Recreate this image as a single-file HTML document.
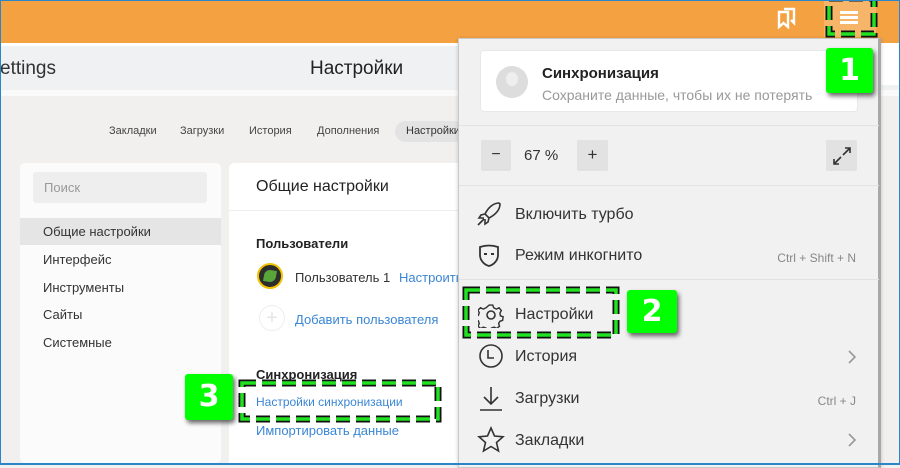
<!DOCTYPE html>
<html><head><meta charset="utf-8"><style>
*{margin:0;padding:0;box-sizing:border-box}
body{width:900px;height:465px;overflow:hidden;font-family:"Liberation Sans","DejaVu Sans",sans-serif;background:#f1f0ef;position:relative;color:#222}
.a{position:absolute}
.frame{position:absolute;left:0;top:0;width:900px;height:465px;border:1px solid #2a86c8;border-bottom-width:2px;pointer-events:none;z-index:50}
.lab{position:absolute;background:#00ff00;color:#fff;font-weight:bold;font-size:30px;text-align:center;border-radius:3px;box-shadow:2px 3px 5px rgba(0,0,0,.6);z-index:40;font-family:"DejaVu Sans",sans-serif}
.mi{position:absolute;left:515px;font-size:16px;color:#333}
.sc{position:absolute;right:44px;font-size:12px;color:#888}
.side{position:absolute;left:43px;font-size:13px;color:#333}
svg.ic{position:absolute;fill:none;stroke:#333;stroke-width:1.6}
</style></head><body>
<div class="a" style="left:0;top:0;width:900px;height:43px;background:#f4a142"></div>
<div class="a" style="left:824px;top:0;width:52px;height:37px;background:#f7b56a"></div>
<svg class="a" style="left:776px;top:7px" width="22" height="22" viewBox="0 0 22 22"><path d="M3 5h9v15l-4.5-4-4.5 4z M8 2h10v14l-3-3" fill="none" stroke="#fff" stroke-width="2.4"/></svg>
<div class="a" style="left:840px;top:11px;width:18px;height:3px;background:#fff"></div>
<div class="a" style="left:840px;top:16px;width:18px;height:3px;background:#fff"></div>
<div class="a" style="left:840px;top:21px;width:18px;height:3px;background:#fff"></div>
<div class="a" style="left:0;top:46px;width:900px;height:44px;background:#f0f1f3"></div>
<div class="a" style="left:0;top:43px;width:900px;height:3px;background:#fff"></div>
<div class="a" style="left:0;top:90px;width:900px;height:6px;background:#fafafa"></div>
<div class="a" style="left:0;top:58px;font-size:19px;color:#333">ettings</div>
<div class="a" style="left:310px;top:58px;font-size:19px;color:#222">Настройки</div>
<div class="a" style="top:125px;font-size:11px;color:#444;left:109px">Закладки</div>
<div class="a" style="top:125px;font-size:11px;color:#444;left:180px">Загрузки</div>
<div class="a" style="top:125px;font-size:11px;color:#444;left:249px">История</div>
<div class="a" style="top:125px;font-size:11px;color:#444;left:317px">Дополнения</div>
<div class="a" style="top:121px;left:395px;width:70px;height:21px;border-radius:11px;background:#e3e3e3"></div>
<div class="a" style="top:125px;font-size:11px;color:#333;left:406px">Настройки</div>
<div class="a" style="left:20px;top:163px;width:201px;height:300px;background:#fbfbfb;border-radius:5px"></div>
<div class="a" style="left:33px;top:172px;width:174px;height:31px;background:#eeeeee;border-radius:3px"></div>
<div class="a" style="left:44px;top:180px;font-size:13px;color:#999">Поиск</div>
<div class="a" style="left:20px;top:218px;width:201px;height:27px;background:#e5e5e5"></div>
<div class="side" style="top:224px">Общие настройки</div>
<div class="side" style="top:252px">Интерфейс</div>
<div class="side" style="top:280px">Инструменты</div>
<div class="side" style="top:307px">Сайты</div>
<div class="side" style="top:335px">Системные</div>
<div class="a" style="left:229px;top:163px;width:240px;height:300px;background:#fff;border-radius:5px 0 0 0"></div>
<div class="a" style="left:229px;top:210px;width:240px;height:1px;background:#eee"></div>
<div class="a" style="left:256px;top:178px;font-size:16px;color:#222">Общие настройки</div>
<div class="a" style="left:256px;top:236px;font-size:13px;font-weight:bold;color:#222">Пользователи</div>
<div class="a" style="left:257px;top:263px;width:26px;height:26px;border-radius:50%;background:#2d2d2d;border:2px solid #f2c200"></div>
<div class="a" style="left:264px;top:270px;width:12px;height:12px;border-radius:50% 0;background:#5aa53a;transform:rotate(10deg)"></div>
<div class="a" style="left:295px;top:270px;font-size:13px;color:#333">Пользователь 1</div>
<div class="a" style="left:399px;top:270px;font-size:13px;color:#3a86d4">Настроить</div>
<div class="a" style="left:259px;top:305px;width:26px;height:26px;border-radius:50%;border:1px solid #eee;color:#e5e5e5;font-size:20px;text-align:center;line-height:24px">+</div>
<div class="a" style="left:295px;top:312px;font-size:13px;color:#3a86d4">Добавить пользователя</div>
<div class="a" style="left:256px;top:367px;font-size:13px;font-weight:bold;color:#222">Синхронизация</div>
<div class="a" style="left:256px;top:395px;font-size:12px;color:#3a86d4">Настройки синхронизации</div>
<div class="a" style="left:256px;top:423px;font-size:13px;color:#3a86d4">Импортировать данные</div>
<div class="a" style="left:880px;top:43px;width:20px;height:42px;background:#fff"></div>
<div class="a" style="left:458px;top:38px;width:423px;height:430px;background:#f1f1f1;border:1px solid #c9c9c9;border-right:3px solid #a8a8a8;box-shadow:0 1px 4px rgba(0,0,0,.2)"></div>
<div class="a" style="left:480px;top:50px;width:378px;height:62px;background:#fff;border-radius:4px;border:1px solid #e8e8e8"></div>
<div class="a" style="left:496px;top:66px;width:32px;height:32px;border-radius:50%;background:#ddd"></div>
<div class="a" style="left:506px;top:72px;width:12px;height:14px;border-radius:50%;background:#eee"></div>
<div class="a" style="left:542px;top:65px;font-size:15px;font-weight:bold;color:#222">Синхронизация</div>
<div class="a" style="left:542px;top:87px;font-size:14px;color:#999">Сохраните данные, чтобы их не потерять</div>
<div class="a" style="left:459px;top:125px;width:420px;height:1px;background:#e2e2e2"></div>
<div class="a" style="left:481px;top:140px;width:30px;height:31px;background:#e2e2e2;border-radius:2px;text-align:center;font-size:16px;line-height:30px;color:#333">−</div>
<div class="a" style="left:524px;top:147px;font-size:15px;color:#333">67 %</div>
<div class="a" style="left:577px;top:140px;width:31px;height:31px;background:#e2e2e2;border-radius:2px;text-align:center;font-size:17px;line-height:30px;color:#333">+</div>
<div class="a" style="left:826px;top:140px;width:31px;height:31px;background:#e2e2e2;border-radius:2px"></div>
<svg class="ic" style="left:832px;top:146px" width="20" height="20" viewBox="0 0 20 20"><path d="M11 9l7-7M13 2h5v5M9 11l-7 7M2 13v5h5"/></svg>
<div class="a" style="left:459px;top:185px;width:420px;height:1px;background:#e2e2e2"></div>
<svg class="ic" style="left:475px;top:200px" width="28" height="28" viewBox="0 0 28 28"><path d="M24 3c-6 0-11 5-14 11l4 4c6-3 11-8 11-14zM10 14l-4 1-2 3 5 0M14 18l-1 4-3 2 0-5M9 19l-6 6"/></svg>
<div class="mi" style="top:206px">Включить турбо</div>
<svg class="ic" style="left:478px;top:244px" width="22" height="24" viewBox="0 0 22 24"><path d="M2 3c6-2 12-2 18 0v8c0 6-5 10-9 11-4-1-9-5-9-11z" stroke-width="1.8"/><path d="M6 10h3M13 10h3" stroke-width="2"/></svg>
<div class="mi" style="top:247px">Режим инкогнито</div>
<div class="sc" style="top:251px">Ctrl + Shift + N</div>
<div class="a" style="left:459px;top:279px;width:420px;height:1px;background:#e2e2e2"></div>
<svg class="ic" style="left:478px;top:302px" width="26" height="26" viewBox="0 0 26 26"><circle cx="13" cy="13" r="4"/><path d="M11 2h4l1 3 3 1.5 3-1.5 2.5 3-1.5 3 .5 3 3 1-.5 4-3 1-1.5 2.5 1 3-3 2.5-3-1.5-3 1-1 3h-4l-1-3-3-1-3 1.5-3-2.5 1.5-3-1-3-3-1v-4l3-1 1-3-1.5-3 3-2.5 3 1.5 3-1.5z" transform="scale(.9) translate(1.4 1.4)"/></svg>
<div class="mi" style="top:306px">Настройки</div>
<svg class="ic" style="left:478px;top:343px" width="26" height="26" viewBox="0 0 26 26"><circle cx="13" cy="13" r="11"/><path d="M10 7v8h6"/></svg>
<div class="mi" style="top:348px">История</div>
<svg class="ic" style="left:847px;top:349px" width="10" height="16" viewBox="0 0 10 16"><path d="M2 2l6 6-6 6" stroke="#999"/></svg>
<svg class="ic" style="left:478px;top:385px" width="26" height="28" viewBox="0 0 26 28"><path d="M13 2v16M6 12l7 7 7-7M2 25h22"/></svg>
<div class="mi" style="top:390px">Загрузки</div>
<div class="sc" style="top:394px">Ctrl + J</div>
<svg class="ic" style="left:477px;top:426px" width="28" height="28" viewBox="0 0 28 28"><path d="M14 2l3.5 8 8.5.8-6.5 5.7 2 8.5L14 20.5 6.5 25l2-8.5L2 10.8l8.5-.8z"/></svg>
<div class="mi" style="top:432px">Закладки</div>
<svg class="ic" style="left:847px;top:432px" width="10" height="16" viewBox="0 0 10 16"><path d="M2 2l6 6-6 6" stroke="#999"/></svg>
<svg class="a" style="left:0;top:0;z-index:30" width="900" height="465">
<g fill="none" stroke-dasharray="14 6">
<rect x="829" y="-2" width="45" height="36" stroke="#111" stroke-width="7"/>
<rect x="829" y="-2" width="45" height="36" stroke="#22e022" stroke-width="3.5"/>
<rect x="466" y="290" width="150" height="45" stroke="#111" stroke-width="7"/>
<rect x="466" y="290" width="150" height="45" stroke="#22e022" stroke-width="3.5"/>
<rect x="242" y="383" width="196" height="36" stroke="#111" stroke-width="7"/>
<rect x="242" y="383" width="196" height="36" stroke="#22e022" stroke-width="3.5"/>
</g></svg>
<div class="lab" style="left:826px;top:48px;width:47px;height:45px;line-height:45px">1</div>
<div class="lab" style="left:627px;top:290px;width:50px;height:43px;line-height:43px">2</div>
<div class="lab" style="left:185px;top:374px;width:48px;height:46px;line-height:46px">3</div>
<div class="frame"></div>
</body></html>
